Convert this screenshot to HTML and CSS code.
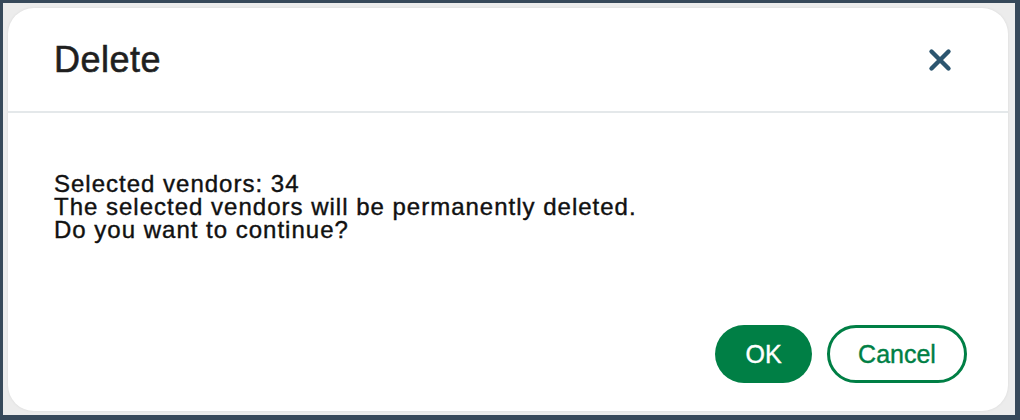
FILE: index.html
```html
<!DOCTYPE html>
<html lang="en">
<head>
<meta charset="utf-8">
<title>Delete</title>
<link rel="stylesheet" href="styles.css">
</head>
<body>
<div class="backdrop">
  <div class="dialog" role="dialog" aria-labelledby="dlg-title">
    <div class="dialog-header">
      <h1 class="dialog-title" id="dlg-title">Delete</h1>
      <button class="close-btn" aria-label="Close">
        <svg width="24" height="24" viewBox="0 0 24 24" aria-hidden="true">
          <path d="M3.5 3.5 L20.5 20.5 M20.5 3.5 L3.5 20.5" stroke="#2c5670" stroke-width="4.4" stroke-linecap="round" fill="none"/>
        </svg>
      </button>
    </div>
    <div class="dialog-body">
      <p class="msg">Selected vendors: 34</p>
      <p class="msg">The selected vendors will be permanently deleted.</p>
      <p class="msg">Do you want to continue?</p>
    </div>
    <div class="dialog-footer">
      <button class="btn btn-primary">OK</button>
      <button class="btn btn-outline">Cancel</button>
    </div>
  </div>
</div>
</body>
</html>
```

FILE: styles.css
```css
html, body {
  margin: 0;
  padding: 0;
}

body {
  background: #37495a;
  width: 1020px;
  height: 420px;
  overflow: hidden;
  font-family: "Liberation Sans", Arial, Helvetica, sans-serif;
}

.backdrop {
  box-sizing: border-box;
  margin: 3px 5px 5px 3px;
  width: 1012px;
  height: 412px;
  background: #ececec;
  padding: 5px 7px 4px 5px;
}

.dialog {
  box-sizing: border-box;
  width: 1000px;
  height: 403px;
  background: #ffffff;
  border-radius: 26px;
  box-shadow: 0 0 3px rgba(0, 0, 0, 0.08);
  display: flex;
  flex-direction: column;
}

.dialog-header {
  box-sizing: border-box;
  height: 105px;
  flex: 0 0 auto;
  display: flex;
  align-items: center;
  justify-content: space-between;
  padding: 0 56px 0 46px;
  border-bottom: 2px solid #e4e8ea;
}

.dialog-title {
  margin: 0;
  font-size: 36px;
  font-weight: normal;
  color: #1f1f1f;
  line-height: 40px;
  letter-spacing: 0.5px;
  -webkit-text-stroke: 0.6px #1f1f1f;
}

.close-btn {
  border: 0;
  background: none;
  padding: 0;
  width: 24px;
  height: 24px;
  display: flex;
  cursor: pointer;
}

.dialog-body {
  flex: 1 1 auto;
  padding: 59px 46px 0;
}

.msg {
  margin: 0;
  font-size: 24px;
  line-height: 23px;
  letter-spacing: 1px;
  color: #111111;
  -webkit-text-stroke: 0.4px #111111;
}

.dialog-footer {
  display: flex;
  justify-content: flex-end;
  gap: 15px;
  padding: 0 41px 28px;
}

.btn {
  box-sizing: border-box;
  height: 58px;
  border-radius: 29px;
  font-family: "Liberation Sans", Arial, Helvetica, sans-serif;
  font-size: 25px;
  cursor: pointer;
  display: flex;
  align-items: center;
  justify-content: center;
  -webkit-text-stroke: 0.4px currentColor;
}

.btn-primary {
  width: 97px;
  background: #007f45;
  color: #ffffff;
  border: 0;
}

.btn-outline {
  width: 140px;
  background: #ffffff;
  color: #007f45;
  border: 3px solid #007f45;
}
```
